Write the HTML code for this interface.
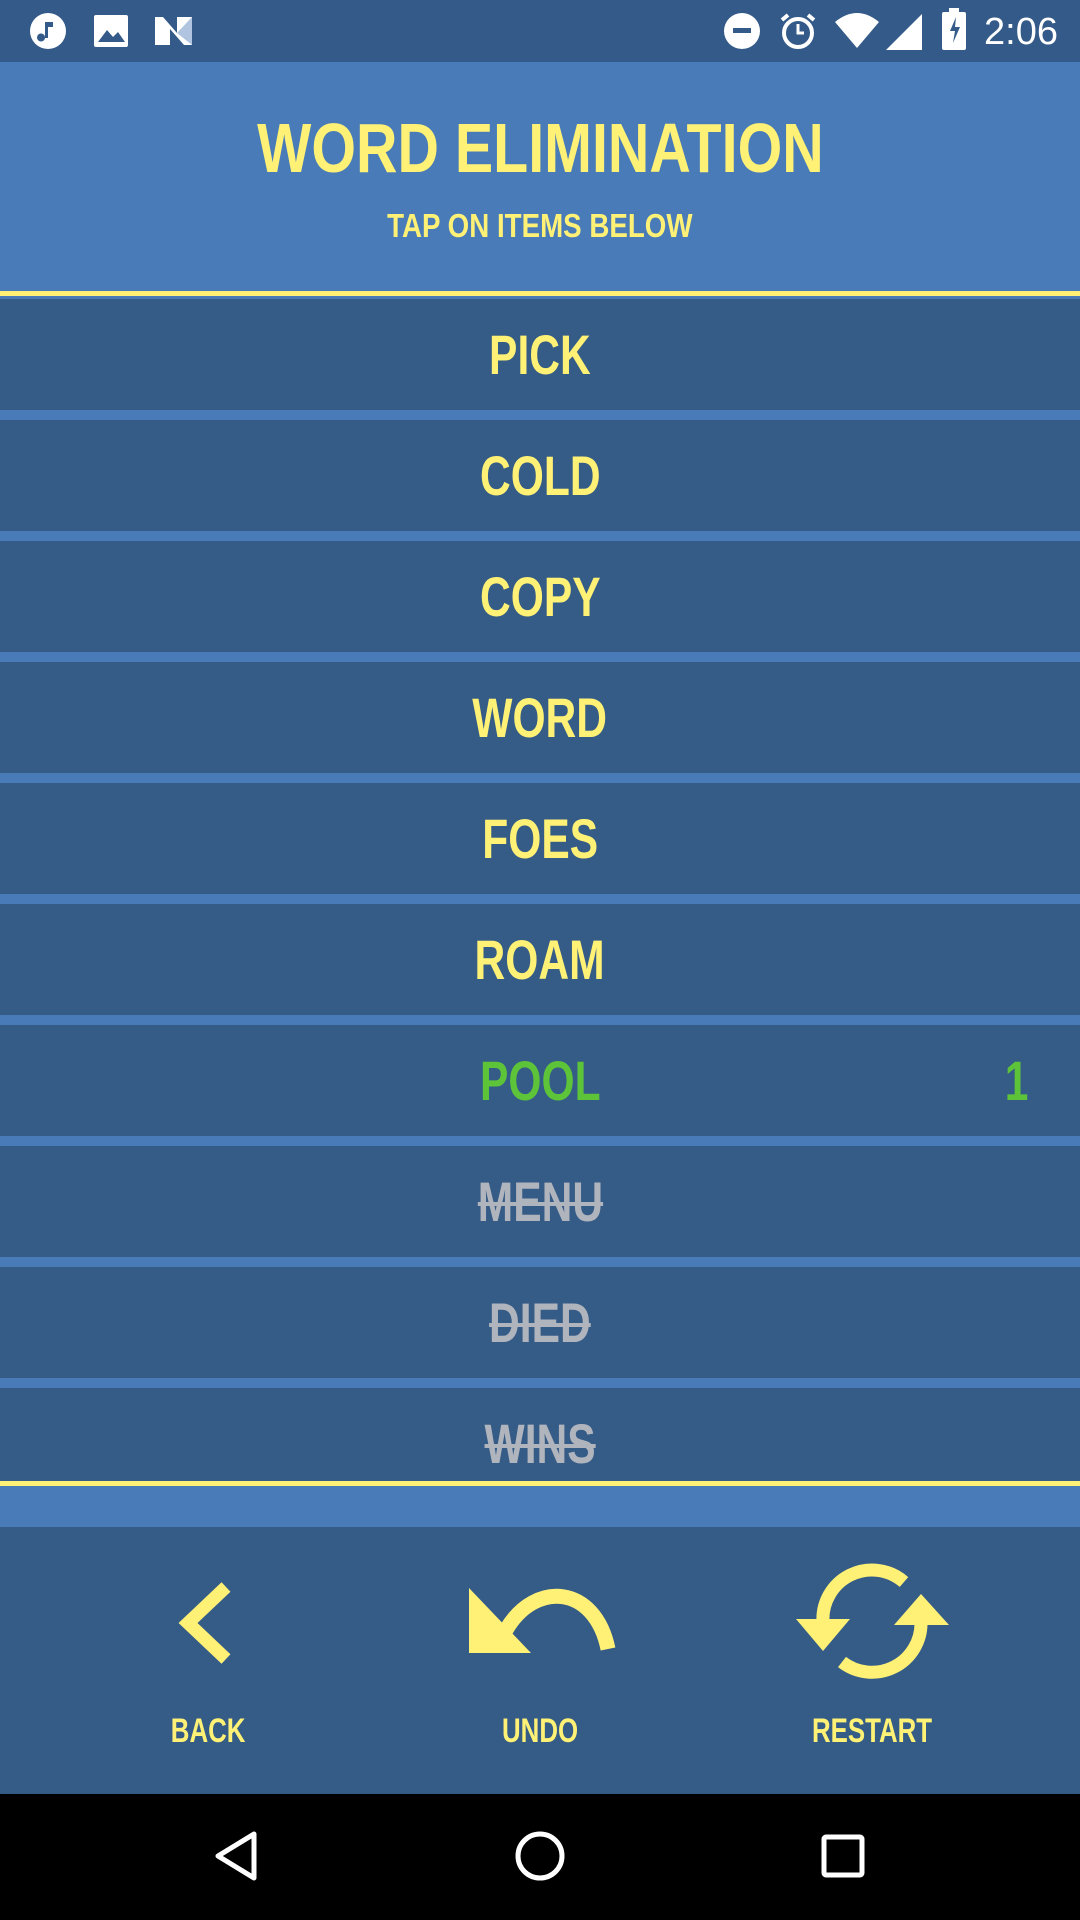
<!DOCTYPE html>
<html><head><meta charset="utf-8"><style>
body{margin:0;width:1080px;height:1920px;overflow:hidden;background:#355b87;font-family:"Liberation Sans",sans-serif;font-weight:bold;position:relative}
.abs{position:absolute}
.s{display:inline-block;transform:scaleX(.76);transform-origin:center}
.status{left:0;top:0;width:1080px;height:62px;background:#335a88}
.header{left:0;top:62px;width:1080px;height:229px;background:#487bb8}
.title{left:0;width:1080px;text-align:center;color:#fff176}
.yl{left:0;width:1080px;height:5px;background:#fff176}
.row{left:0;width:1080px;height:111px;background:#355b87;text-align:center;line-height:111px;font-size:56px;color:#fff176}
.gap{left:0;width:1080px;height:10px;background:#487bb8}
.g{color:#5dc43a}.x{color:#b0b4bc;text-decoration:line-through;text-decoration-thickness:4px}
.lbl{top:1712px;width:200px;margin-left:-100px;text-align:center;font-size:34px;color:#fff176}
.nav{left:0;top:1794px;width:1080px;height:126px;background:#000}
</style></head><body>
<div class="abs status"></div>
<svg class="abs" style="left:0;top:0" width="1080" height="62">
<circle cx="48" cy="31" r="18" fill="#fff"/><path d="M45 38 a4 4 0 1 1 0-1 V22 h8 v5 h-5 v11" fill="#335a88"/>
<rect x="94" y="15" width="34" height="32" fill="#fff" rx="2"/><path d="M98 42 L107 30 L113 37 L118 32 L125 42Z" fill="#335a88"/>
<path d="M155 17 h8 l14 16 V17 h15 v28 h-8 l-14-16 v16 h-15z" fill="#fff"/><path d="M177 33 l15 12 V17z" fill="#b0c4e0"/>
<circle cx="742" cy="31" r="18" fill="#fff"/><rect x="733" y="28" width="18" height="5" fill="#335a88"/>
<circle cx="798" cy="33" r="14" fill="none" stroke="#fff" stroke-width="4"/><path d="M798 24 v9 h6" stroke="#fff" stroke-width="3" fill="none"/><path d="M782 20 l6-5 M814 20 l-6-5" stroke="#fff" stroke-width="4"/>
<path d="M835 22 Q857 4 879 22 L857 48Z" fill="#fff"/>
<path d="M886 50 L922 14 V50Z" fill="#fff"/>
<rect x="942" y="12" width="24" height="38" fill="#fff" rx="2"/><rect x="949" y="8" width="10" height="5" fill="#fff"/><path d="M956 17 l-6 14 h5 l-2 12 7-16 h-5z" fill="#335a88"/>
<text x="1058" y="44" text-anchor="end" fill="#fff" font-family="Liberation Sans" font-weight="normal" font-size="38">2:06</text>
</svg>
<div class="abs header"></div>
<div class="abs title" style="top:108px;font-size:70px;line-height:80px"><span class="s" style="transform:scaleX(.82)">WORD ELIMINATION</span></div>
<div class="abs title" style="top:206px;font-size:33px;line-height:40px"><span class="s" style="transform:scaleX(.84)">TAP ON ITEMS BELOW</span></div>
<div class="abs yl" style="top:291px"></div>
<div class="abs gap" style="top:296px;height:3px"></div>
<div class="abs row" style="top:299px"><span class="s">PICK</span></div><div class="abs gap" style="top:410px"></div>
<div class="abs row" style="top:420px"><span class="s">COLD</span></div><div class="abs gap" style="top:531px"></div>
<div class="abs row" style="top:541px"><span class="s">COPY</span></div><div class="abs gap" style="top:652px"></div>
<div class="abs row" style="top:662px"><span class="s">WORD</span></div><div class="abs gap" style="top:773px"></div>
<div class="abs row" style="top:783px"><span class="s">FOES</span></div><div class="abs gap" style="top:894px"></div>
<div class="abs row" style="top:904px"><span class="s">ROAM</span></div><div class="abs gap" style="top:1015px"></div>
<div class="abs row g" style="top:1025px"><span class="s">POOL</span><span style="position:absolute;right:48px;transform:scaleX(.76)">1</span></div><div class="abs gap" style="top:1136px"></div>
<div class="abs row" style="top:1146px"><span class="s x">MENU</span></div><div class="abs gap" style="top:1257px"></div>
<div class="abs row" style="top:1267px"><span class="s x">DIED</span></div><div class="abs gap" style="top:1378px"></div>
<div class="abs row" style="top:1388px;height:93px"><span class="s x">WINS</span></div>
<div class="abs yl" style="top:1481px"></div>
<div class="abs gap" style="top:1486px;height:41px"></div>
<svg class="abs" style="left:0;top:1527px" width="1080" height="267">
<g transform="translate(0,-1527)" fill="#fff176" stroke="#fff176">
<path d="M226 1587 L188 1623 L226 1659" fill="none" stroke-width="13" stroke-linejoin="miter"/>
<path d="M469 1588 L469 1653 L531 1653Z" stroke="none"/>
<path d="M506 1630 C535 1580 595 1585 608 1649" fill="none" stroke-width="15"/>
<path d="M904 1582 A49 49 0 0 0 823 1622" fill="none" stroke-width="13"/>
<path d="M796 1619 L850 1619 L823 1651Z" stroke="none"/>
<path d="M842 1662 A49 49 0 0 0 921 1622" fill="none" stroke-width="13"/>
<path d="M894 1625 L949 1625 L921 1594Z" stroke="none"/>
</g></svg>
<div class="abs lbl" style="left:208px"><span class="s">BACK</span></div>
<div class="abs lbl" style="left:540px"><span class="s">UNDO</span></div>
<div class="abs lbl" style="left:872px"><span class="s">RESTART</span></div>
<div class="abs nav"></div>
<svg class="abs" style="left:0;top:1794px" width="1080" height="126">
<path d="M254 40 L218 62 L254 84Z" fill="none" stroke="#fff" stroke-width="5" stroke-linejoin="round"/>
<circle cx="540" cy="62" r="22" fill="none" stroke="#fff" stroke-width="5"/>
<rect x="824" y="43" width="38" height="38" fill="none" stroke="#fff" stroke-width="5" rx="2"/>
</svg>
</body></html>
